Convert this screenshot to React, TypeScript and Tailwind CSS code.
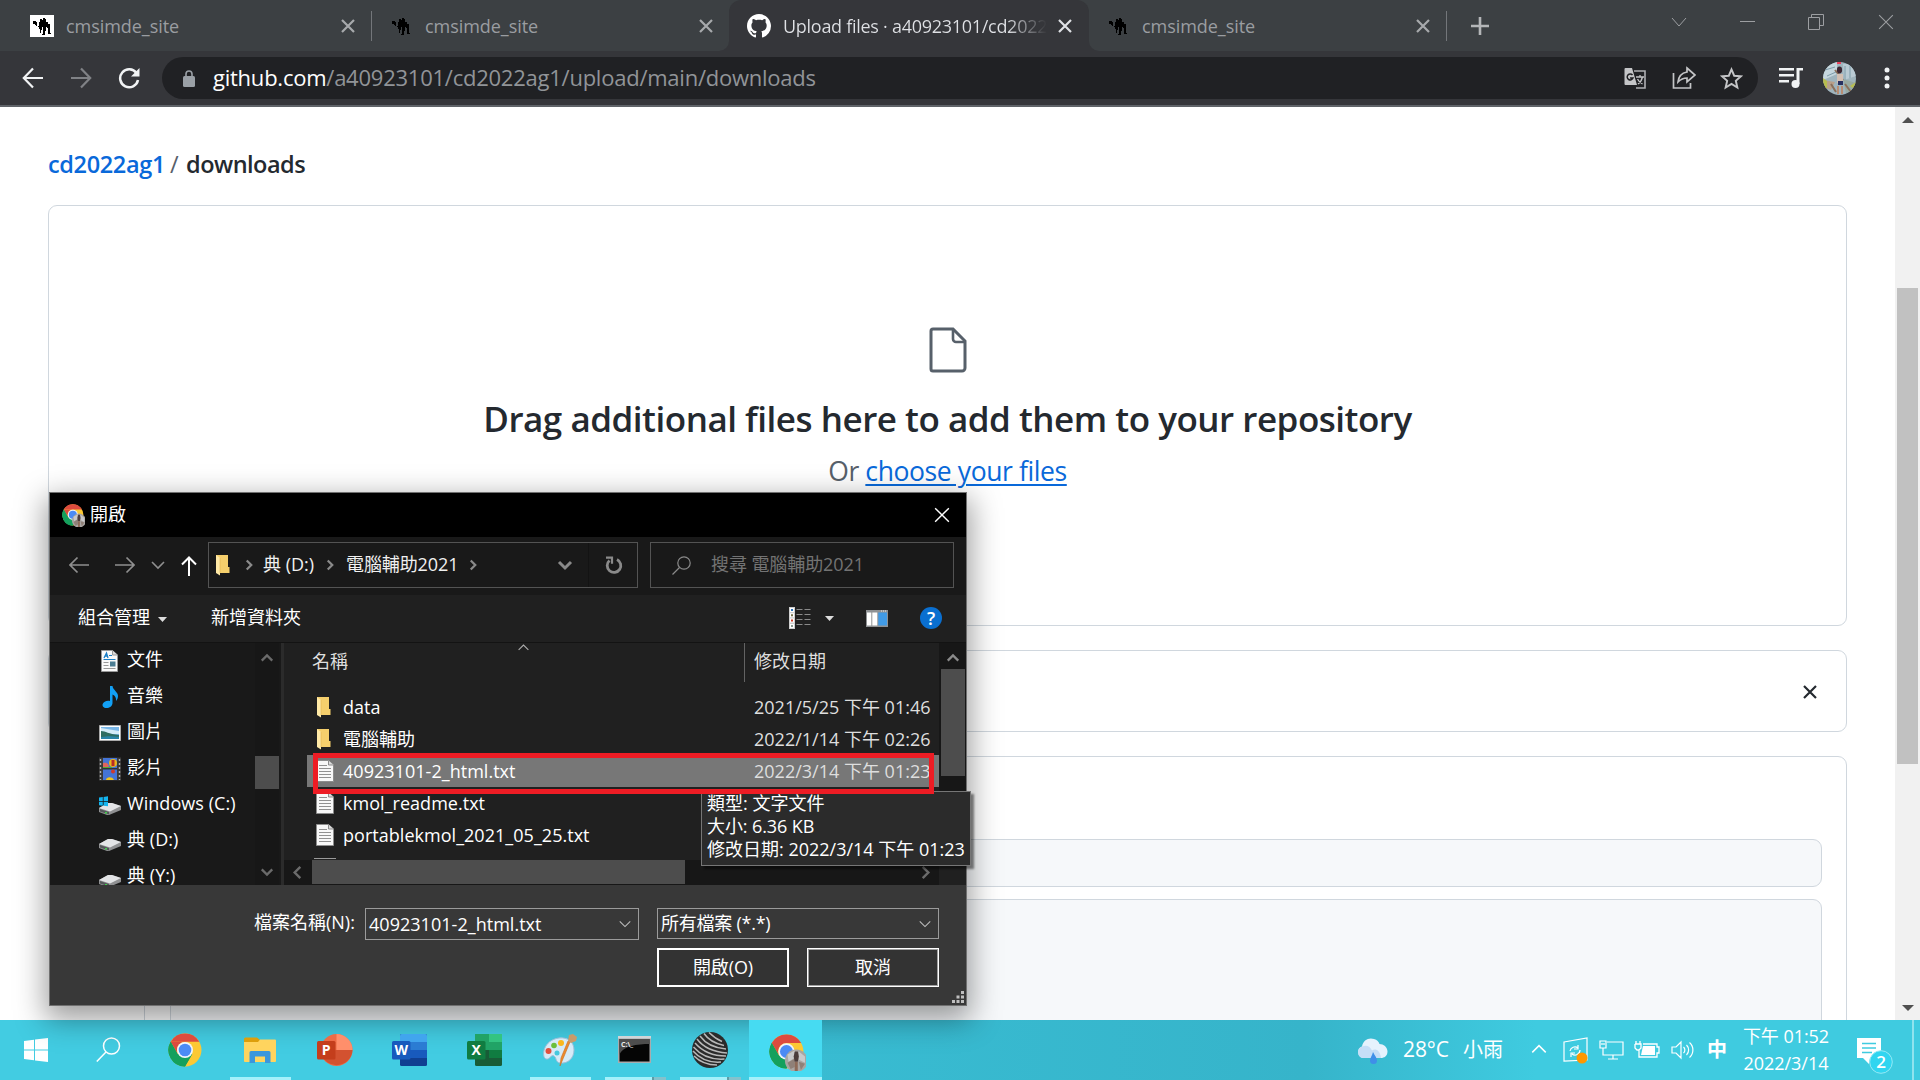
import React from "react";

const FONT = "font-['Open_Sans','Noto_Sans_CJK_TC',sans-serif]";

function Camel({ light }: { light?: boolean }) {
  return (
    <svg className={light ? "h-[22px] w-6 bg-white" : "h-[22px] w-6"} viewBox="0 0 24 22" shapeRendering="crispEdges">
      <path
        fill="#000"
        d="M3 6h3v1h1v4h2V7h1V4h2v1h1V3h2v1h1v3h2v2h2v9h1v1h-3v-6h-1v-1h-1v4h-1v4h-3v-1h1v-7h-1v3h-1v3h-1v-4h-1v-2H8v-1H6v-1H5V9H3z"
      />
    </svg>
  );
}

function Cross({ className, size = 14, w = 2.2 }: { className: string; size?: number; w?: number }) {
  return (
    <svg className={className} width={size} height={size} viewBox="0 0 14 14" fill="none" stroke="currentColor" strokeWidth={w}>
      <path d="M1 1l12 12M13 1L1 13" />
    </svg>
  );
}

function Chevron({ className, d = "M2 5l6 6 6-6", w = 1.6, size = 16 }: { className?: string; d?: string; w?: number; size?: number }) {
  return (
    <svg className={className} width={size} height={size} viewBox="0 0 16 16" fill="none" stroke="currentColor" strokeWidth={w}>
      <path d={d} />
    </svg>
  );
}

const UP = "M2 11l6-6 6 6";
const RIGHT = "M5 2l6 6-6 6";
const LEFT = "M11 2l-6 6 6 6";

function GitHubMark() {
  return (
    <svg className="h-6 w-6" viewBox="0 0 16 16" fill="#fff">
      <path d="M8 0C3.58 0 0 3.58 0 8c0 3.54 2.29 6.53 5.47 7.59.4.07.55-.17.55-.38 0-.19-.01-.82-.01-1.49-2.01.37-2.53-.49-2.69-.94-.09-.23-.48-.94-.82-1.13-.28-.15-.68-.52-.01-.53.63-.01 1.08.58 1.23.82.72 1.21 1.87.87 2.33.66.07-.52.28-.87.51-1.07-1.78-.2-3.64-.89-3.64-3.95 0-.87.31-1.59.82-2.15-.08-.2-.36-1.02.08-2.12 0 0 .67-.21 2.2.82.64-.18 1.32-.27 2-.27s1.36.09 2 .27c1.53-1.04 2.2-.82 2.2-.82.44 1.1.16 1.92.08 2.12.51.56.82 1.27.82 2.15 0 3.07-1.87 3.75-3.65 3.95.29.25.54.73.54 1.48 0 1.07-.01 1.93-.01 2.2 0 .21.15.46.55.38A8.01 8.01 0 0 0 16 8c0-4.42-3.58-8-8-8z" />
    </svg>
  );
}

function ChromeLogo({ className, badge }: { className: string; badge?: boolean }) {
  return (
    <svg className={className} viewBox="0 0 36 36">
      <circle cx="17" cy="17" r="16.5" fill="#fcc934" />
      <path d="M2.7 8.75A16.5 16.5 0 0 1 31.3 8.75H17z" fill="#dd4b3e" />
      <path d="M2.7 8.75A16.5 16.5 0 0 0 17 33.5l7.2-12.4-7.2-3.9-7.4 4z" fill="#14a05d" />
      <path d="M2.7 8.75L10 21.2A8.3 8.3 0 0 1 17 8.75z" fill="#dd4b3e" />
      <path d="M2.7 8.75a16.5 16.5 0 0 0 0 16.5A16.5 16.5 0 0 0 17 33.5l7.2-12.3a8.3 8.3 0 0 1-14.4 0z" fill="#14a05d" />
      <circle cx="17" cy="17" r="8" fill="#f1f5fb" />
      <circle cx="17" cy="17" r="6.3" fill="#4b8bf5" />
      {badge && (
        <g>
          <circle cx="26.5" cy="26" r="11" fill="#a9a5a2" />
          <path d="M18 20l7-4 2 6-8 5zM29 17l6 5v6l-6-3z" fill="#c8c9cb" />
          <path d="M18 28l7-4v8l-4 2zM29 27l6 2-4 6z" fill="#8f8078" />
          <path d="M25 17h3l1 5-1 5h-3l-1-5z" fill="#4a3c3c" />
          <path d="M25 27h3v9h-3z" fill="#8d6a58" />
        </g>
      )}
    </svg>
  );
}

function Avatar() {
  return (
    <svg className="h-[33px] w-[33px] rounded-full" viewBox="0 0 33 33">
      <rect width="33" height="33" fill="#9fb4bd" />
      <path d="M0 0h14v12L0 18z" fill="#c5d6dd" />
      <path d="M20 2h13v12l-12 4z" fill="#b9cad3" />
      <path d="M2 8l10-3M4 14l9-4M22 4v14M27 4v12" stroke="#7d9ba8" strokeWidth="1" />
      <path d="M0 18l12 2-4 8-8-3z" fill="#b9a08a" />
      <path d="M20 17l13 4v7l-10 3z" fill="#98a9a2" />
      <path d="M0 16l4 3v7H0zM27 24l6-4v8z" fill="#b7bd4e" />
      <path d="M12 8l8 10M22 22l6 8M8 22l5 8" stroke="#8a705b" strokeWidth="2" />
      <path d="M14 0h4v2h-4z" fill="#ef3c58" />
      <ellipse cx="16.5" cy="8" rx="2.6" ry="3.4" fill="#3c2732" />
      <path d="M14 12h6v9h-6z" fill="#d2bfb2" />
      <path d="M15 19h5v4h-5z" fill="#283060" />
      <path d="M14 24h2v8h-2zM18 24h2v8h-2z" fill="#b98d72" />
    </svg>
  );
}

function Folder() {
  return (
    <svg className="h-[22px] w-[15px] shrink-0" viewBox="0 0 15 22">
      <path d="M1 1h12v12h1.500v6H1z" fill="#f5cf6c" />
      <path d="M1 1l4 3v17.500L1 19z" fill="#ffe9a6" />
      <path d="M5 4v15" stroke="#dfb453" strokeWidth=".6" />
    </svg>
  );
}

function TextFile() {
  return (
    <svg className="h-[22px] w-[18px] shrink-0" viewBox="0 0 18 22">
      <path d="M.5.500h12l5 4.500v16.500H.5z" fill="#f8f8f8" stroke="#8d8d8d" />
      <path d="M12.500.500v4.500h5" fill="#ddd" stroke="#8d8d8d" />
      <path d="M3 5.500h8M3 8.500h12M3 11.500h12M3 14.500h12M3 17.500h12" stroke="#909090" />
    </svg>
  );
}

function Drive({ win }: { win?: boolean }) {
  return (
    <svg className="h-[22px] w-[22px]" viewBox="0 0 22 22">
      <path d="M0 14l9-5h4l9 3v4l-12 5H8l-8-3z" fill="#8f9092" />
      <path d="M0 14l9-5h4l9 3-11 5.500z" fill="#e3e4e6" />
      <path d="M1 15l9 3v2.500l-9-3z" fill="#55585a" />
      <path d="M6 18h2v1.500H6z" fill="#3fd04a" />
      {win && <path d="M0 3.500l3.800-.5v4H0zM4.600 2.900L9 2.300V7H4.600zM0 7.800h3.800v4L0 11.300zM4.600 7.800H9v4.400l-4.400-.5z" fill="#13b5f0" />}
    </svg>
  );
}

function DocIcon() {
  return (
    <svg className="h-[22px] w-[22px]" viewBox="0 0 22 22">
      <path d="M2.500.500h11l5 4.500v16.500h-16z" fill="#fafafa" stroke="#999" />
      <path d="M13.500.500v4.500h5" fill="#ddd" stroke="#999" />
      <path d="M5 8l2.500-5L9 8M5.500 6H9" stroke="#1a7fc8" strokeWidth="1.300" fill="none" />
      <path d="M10 5.500h3M4.500 9.500h12" stroke="#1a7fc8" strokeWidth="1.200" />
      <path d="M4.500 12.500h5M4.500 15.500h5M4.500 18.500h12" stroke="#999" />
      <path d="M11 11.500h5.500v5H11z" fill="#4b7d93" />
    </svg>
  );
}

function MusicIcon() {
  return (
    <svg className="h-6 w-[22px]" viewBox="0 0 22 24">
      <path d="M11 1h2.500c.5 4 5.500 6 5.500 10 0 2-1 4-2 5 .3-3-.8-5.500-3.500-6.500V18c0 3-3 5-6 5s-4.500-2-3.800-4c.8-2.400 4.300-4 7.300-3z" fill="#12a0f5" />
    </svg>
  );
}

function PictureIcon() {
  return (
    <svg className="h-4 w-[22px]" viewBox="0 0 22 16">
      <path d="M.5.500h21v15H.5z" fill="#fff" stroke="#aaa" />
      <path d="M2 2h18v12H2z" fill="#79b7e8" />
      <path d="M2 3l18 3v3H2z" fill="#d5ebf8" />
      <path d="M2 6c5 0 7 3 18 4v4H2z" fill="#2f6d62" />
      <path d="M2 12c7-1 12-1 18 0v2H2z" fill="#2a84a8" />
    </svg>
  );
}

function VideoIcon() {
  return (
    <svg className="h-6 w-[22px]" viewBox="0 0 22 24">
      <path d="M0 .500h22v23H0z" fill="#3a3a3a" />
      <path d="M1.500 2v21M20.500 2v21" stroke="#b0b0b0" strokeWidth="1.400" strokeDasharray="2 2" />
      <path d="M4 1h14v22H4z" fill="#4474d6" />
      <path d="M4 11h14v1.500H4z" fill="#333" />
      <circle cx="14" cy="6" r="4" fill="#e9b61c" />
      <path d="M12.500 3h3v6h-3z" fill="#b92c25" />
      <path d="M4 6c3-1 5 0 6 3l-2 2H4z" fill="#e0655c" />
      <circle cx="14" cy="14.500" r="2" fill="#d03a2c" />
      <path d="M7 23c0-3 6-4 8 0z" fill="#efc31d" />
      <path d="M4 10h9v1H4z" fill="#4dab35" />
    </svg>
  );
}

type TabProps = { className: string; title: string; icon: React.ReactNode; sep?: boolean };

function Tab({ className, title, icon, sep }: TabProps) {
  return (
    <div className={`flex h-[51px] shrink-0 items-center text-[18px] tracking-[-0.05px] text-[#9a9da1] ${className}`}>
      {icon}
      <span className="ml-3 flex-1 truncate leading-[26px]">{title}</span>
      <Cross className="text-[#a7a9ac]" />
      {sep && <span className="ml-[16px] mr-[-17px] h-[30px] w-px bg-[#73767a]" />}
    </div>
  );
}

function BrowserChrome() {
  return (
    <header className="shrink-0">
      <div className="flex h-[51px] bg-[#3c4043]">
        <Tab className="w-[373px] pl-[30px] pr-[18px]" title="cmsimde_site" icon={<Camel light />} sep />
        <Tab className="w-[356px] pl-[16px] pr-[16px]" title="cmsimde_site" icon={<Camel />} />
        <div className="relative flex h-[51px] w-[360px] shrink-0 items-center rounded-t-[12px] bg-[#35363a] pl-[18px] pr-[17px] text-[18px] text-[#dfe1e5]">
          <svg className="absolute -left-[10px] bottom-0" width="10" height="10"><path d="M10 0v10H0A10 10 0 0 0 10 0z" fill="#35363a" /></svg>
          <svg className="absolute -right-[10px] bottom-0" width="10" height="10"><path d="M0 0v10h10A10 10 0 0 1 0 0z" fill="#35363a" /></svg>
          <GitHubMark />
          <span className="ml-3 w-[264px] overflow-hidden whitespace-nowrap bg-linear-to-r from-[#dfe1e5] from-85% to-[#35363a] bg-clip-text leading-[26px] tracking-[-0.28px] text-transparent">
            Upload files · a40923101/cd2022
          </span>
          <Cross className="ml-auto text-[#dfe1e5]" />
        </div>
        <Tab className="w-[359px] pl-[17px] pr-[18px]" title="cmsimde_site" icon={<Camel />} sep />
        <div className="flex flex-1 items-center pl-[23px] text-[#9d9fa2]">
          <svg width="18" height="18" viewBox="0 0 18 18" stroke="#b4b6b8" strokeWidth="2.600"><path d="M9 0v18M0 9h18" /></svg>
          <div className="mb-2 ml-auto flex items-center">
            <Chevron d="M1 4l7 8 7-8" w={1} className="mr-[53px]" />
            <span className="mr-[53px] h-px w-[15px] bg-[#9d9fa2]" />
            <svg className="mr-[54px]" width="16" height="16" viewBox="0 0 16 16" fill="none" stroke="currentColor"><path d="M.5 3.500h11v12H.5zM3.500 3.500v-3h12v11h-4" /></svg>
            <Cross size={16} w={0.9} className="mr-[26px]" />
          </div>
        </div>
      </div>
      <div className="flex h-[56px] items-center border-b-2 border-[#5f6368] bg-[#35363a] pl-[22px]">
        <svg width="22" height="22" viewBox="0 0 22 22" fill="none" stroke="#f1f3f4" strokeWidth="2.200"><path d="M21 11H2M11 1.500L1.800 11l9.200 9.500" /></svg>
        <svg className="ml-[26px]" width="22" height="22" viewBox="0 0 22 22" fill="none" stroke="#808286" strokeWidth="2.200"><path d="M1 11h19M11 1.500l9.200 9.500-9.200 9.500" /></svg>
        <svg className="ml-[26px]" width="22" height="22" viewBox="0 0 22 22" fill="none" stroke="#f1f3f4" strokeWidth="2.500"><path d="M18.500 6A9 9 0 1 0 20 13" /><path d="M21.500 1v8.500h-8.500z" fill="#f1f3f4" stroke="none" /></svg>
        <div className="ml-[22px] flex h-[42px] w-[1596px] items-center rounded-full bg-[#202124] pl-[21px] pr-[15px]">
          <svg width="12" height="17" viewBox="0 0 12 17"><rect y="6" width="12" height="11" rx="1.500" fill="#9aa0a6" /><path d="M3 7V4a3 3 0 0 1 6 0v3" fill="none" stroke="#9aa0a6" strokeWidth="1.600" /></svg>
          <span className="-mt-[2px] ml-[18px] flex-1 text-[22px] leading-[30px] tracking-[-0.24px] text-[#919498]">
            <span className="text-white">github.com</span>/a40923101/cd2022ag1/upload/main/downloads
          </span>
          <svg className="mr-[25px]" width="23" height="23" viewBox="0 0 23 23">
            <path d="M10 4h11v17H12" fill="none" stroke="#aeb0b3" strokeWidth="1.600" />
            <path d="M1.500 1H8l5 17H1.500A1 1 0 0 1 .5 17V2a1 1 0 0 1 1-1z" fill="#c4c5c7" />
            <path d="M8.500 8A3 3 0 1 0 9 11H6" fill="none" stroke="#202124" strokeWidth="1.500" />
            <path d="M12 10h8M16 8v2M18.500 10c-1 4-3 6-4.500 7M13.500 12c1 2 3 4 5 5" fill="none" stroke="#c4c5c7" strokeWidth="1.300" />
          </svg>
          <svg className="mr-[24px]" width="24" height="24" viewBox="0 0 24 24" fill="none" stroke="#c4c5c7" strokeWidth="1.700"><path d="M1.500 7v15h17v-5" /><path d="M15 2l8 7-8 7v-4c-4 0-6 1-9 4 .5-5 3.500-9 9-10z" /></svg>
          <svg width="23" height="23" viewBox="0 0 24 24" fill="none" stroke="#c4c5c7" strokeWidth="2"><path d="M12 2.500l2.800 6.600 7 .6-5.300 4.700 1.600 7L12 17.700l-6.100 3.700 1.600-7-5.300-4.700 7-.6z" /></svg>
        </div>
        <svg className="ml-[21px]" width="24" height="22" viewBox="0 0 24 22" fill="#f1f3f4"><path d="M0 1h15v2.400H0zM0 7h15v2.400H0zM0 13h10v2.400H0zM17.500 1H24v2.600h-3.500V17h-3z" /><circle cx="16.500" cy="17" r="4" /></svg>
        <div className="ml-[20px]"><Avatar /></div>
        <svg className="ml-[28px]" width="6" height="22" viewBox="0 0 6 22" fill="#f1f3f4"><circle cx="3" cy="3" r="2.500" /><circle cx="3" cy="11" r="2.500" /><circle cx="3" cy="19" r="2.500" /></svg>
      </div>
    </header>
  );
}

function UploadPage() {
  return (
    <main className="flex h-[913px] shrink-0 overflow-hidden bg-white">
      <div className="w-[1895px] overflow-hidden px-12 pt-[41px]">
        <h2 className="flex text-[23.5px] font-semibold leading-8 tracking-[-0.5px] text-[#24292f]">
          <span className="w-[122px] tracking-[-0.35px] text-[#0969da]">cd2022ag1</span>
          <span className="w-4 font-normal text-[#57606a]">/</span>
          <span>downloads</span>
        </h2>
        <section className="mt-[25px] flex h-[421px] w-[1799px] flex-col items-center rounded-[9px] border border-[#d0d7de] pt-[121px]">
          <svg width="38" height="46" viewBox="0 0 38 46" fill="none" stroke="#57606a" strokeWidth="3"><path d="M4 2h20l12 12v27a3 3 0 0 1-3 3H4a2 2 0 0 1-2-2V4a2 2 0 0 1 2-2z" /><path d="M24 2v10a3 3 0 0 0 3 3h9" strokeWidth="2.600" /></svg>
          <h3 className="mt-[21px] whitespace-nowrap text-[35px] font-semibold leading-[50px] tracking-[-0.48px] text-[#24292f]">
            Drag additional files here to add them to your repository
          </h3>
          <p className="mt-2 whitespace-nowrap text-[26.5px] leading-[38px] tracking-[-0.4px] text-[#57606a]">
            Or <span className="text-[#0969da] underline decoration-2 underline-offset-[3px]">choose your files</span>
          </p>
        </section>
        <section className="mt-6 flex h-[82px] w-[1799px] items-center justify-end rounded-[9px] border border-[#d0d7de] pr-[29px]">
          <Cross className="mt-px text-[#24292f]" />
        </section>
        <section className="ml-24 mt-6 h-[300px] w-[1703px] rounded-[9px] border border-[#d0d7de] px-[24px] pl-[25px] pt-[82px]">
          <div className="h-12 rounded-[9px] border border-[#d0d7de] bg-[#f6f8fa]" />
          <div className="mt-3 h-[190px] rounded-[9px] border border-[#d0d7de] bg-[#f6f8fa]" />
        </section>
      </div>
      <div className="flex w-[25px] flex-col items-center bg-[#f1f1f1]">
        <svg className="mt-[10px]" width="12" height="6"><path d="M6 0l6 6H0z" fill="#505050" /></svg>
        <div className="mt-[165px] h-[476px] w-[21px] bg-[#c1c1c1]" />
        <svg className="mb-[9px] mt-auto" width="12" height="6"><path d="M6 6l6-6H0z" fill="#505050" /></svg>
      </div>
    </main>
  );
}

const places = [
  { name: "文件", icon: <DocIcon /> },
  { name: "音樂", icon: <MusicIcon /> },
  { name: "圖片", icon: <PictureIcon /> },
  { name: "影片", icon: <VideoIcon /> },
  { name: "Windows (C:)", icon: <Drive win /> },
  { name: "典 (D:)", icon: <Drive /> },
  { name: "典 (Y:)", icon: <Drive /> },
];

const files = [
  { name: "data", date: "2021/5/25 下午 01:46", folder: true },
  { name: "電腦輔助", date: "2022/1/14 下午 02:26", folder: true },
  { name: "40923101-2_html.txt", date: "2022/3/14 下午 01:23", selected: true },
  { name: "kmol_readme.txt", date: "" },
  { name: "portablekmol_2021_05_25.txt", date: "" },
];

function OpenDialog() {
  return (
    <div className="absolute left-[49px] top-[492px] h-[514px] w-[918px] border border-[#707070] bg-[#383838] text-[18px] leading-6 text-white shadow-[0_10px_28px_4px_rgba(0,0,0,0.38)]">
      <div className="flex h-11 items-center bg-black pl-3 pr-[16px]">
        <ChromeLogo className="h-[23px] w-[23px]" badge />
        <span className="-mt-[2px] ml-[5px]">開啟</span>
        <Cross size={16} w={1.2} className="ml-auto" />
      </div>
      <div className="flex h-[58px] items-center bg-[#191919] pl-[19px]">
        <svg className="-mt-[2px]" width="20" height="18" viewBox="0 0 20 18" fill="none" stroke="#8f8f8f" strokeWidth="1.700"><path d="M20 9H1.500M8.500 1.500L1 9l7.500 7.500" /></svg>
        <svg className="-mt-[2px] ml-[26px]" width="20" height="18" viewBox="0 0 20 18" fill="none" stroke="#8f8f8f" strokeWidth="1.700"><path d="M0 9h18.500M11.500 1.500L19 9l-7.500 7.500" /></svg>
        <Chevron className="-mt-[2px] ml-[15px] text-[#8f8f8f]" />
        <svg className="ml-[15px]" width="16" height="20" viewBox="0 0 16 20" fill="none" stroke="#fff" strokeWidth="2"><path d="M8 20V1.500M1 8.500l7-7 7 7" /></svg>
        <div className="ml-[11px] mb-[2px] flex h-[46px] w-[430px] shrink-0 items-center border border-[#535353] text-[#f0f0f0]">
          <div className="ml-[6px]"><Folder /></div>
          <Chevron size={12} w={3} d={RIGHT} className="ml-[13px] text-[#8a8a8a]" />
          <span className="-mt-[2px] ml-[8px] w-[61px] whitespace-nowrap">典 (D:)</span>
          <Chevron size={12} w={3} d={RIGHT} className="text-[#8a8a8a]" />
          <span className="-mt-[2px] ml-[10px] w-[121px] whitespace-nowrap tracking-[-0.1px]">電腦輔助2021</span>
          <Chevron size={12} w={3} d={RIGHT} className="text-[#8a8a8a]" />
          <Chevron w={3} className="ml-auto mr-[15px] text-[#8a8a8a]" />
          <div className="flex h-full w-[49px] items-center justify-center border-l border-[#131313]">
            <svg className="ml-[2px]" width="18" height="19" viewBox="0 0 18 19" fill="none" stroke="#8a8a8a" strokeWidth="2.800"><path d="M12 3.500A6.800 6.800 0 1 1 4.500 4.500" /><path d="M1 1.700h6v6" strokeWidth="2.200" /></svg>
          </div>
        </div>
        <div className="mb-[2px] ml-3 flex h-[46px] w-[304px] items-center border border-[#535353] pl-[21px] text-[#737373]">
          <svg width="19" height="19" viewBox="0 0 19 19" fill="none" stroke="#8a8a8a" strokeWidth="1.200"><circle cx="12" cy="7" r="6.200" /><path d="M7.500 11.500L.5 18.500" /></svg>
          <span className="-mt-[2px] ml-[20px] tracking-[-0.08px]">搜尋 電腦輔助2021</span>
        </div>
      </div>
      <div className="flex h-[48px] items-center border-b border-[#131313] bg-[#202020] pl-[28px] pr-[24px]">
        <span className="-mt-[4px]">組合管理</span>
        <svg className="ml-[8px] mt-[2px]" width="9" height="5"><path d="M0 0h9L4.500 5z" fill="#ddd" /></svg>
        <span className="-mt-[4px] ml-[44px]">新增資料夾</span>
        <svg className="-mt-px ml-auto" width="22" height="22" viewBox="0 0 22 22">
          <path d="M0 0h6v22H0z" fill="#cfcfcf" />
          <path d="M1 1h4v4H1zM1 6.300h4v4H1zM1 11.600h4v4H1zM1 17h4v4H1z" fill="#fff" />
          <path d="M2 2h2v2H2z" fill="#2c75bd" /><path d="M2 7.300h2v2H2z" fill="#75704a" /><path d="M2 12.600h2v2H2z" fill="#d0402a" /><path d="M2 18h2v2H2z" fill="#8d9b92" />
          <path d="M7.500 2.500h6M15.500 2.500h6M7.500 7.500h6M15.500 7.500h6M7.500 12.500h6M15.500 12.500h6M7.500 17.500h6M15.500 17.500h6" stroke="#8a8a8a" />
        </svg>
        <svg className="ml-[14px]" width="9" height="5"><path d="M0 0h9L4.500 5z" fill="#ddd" /></svg>
        <svg className="ml-[32px]" width="22" height="17" viewBox="0 0 22 17"><path d="M0 0h22v17H0z" fill="#8f9294" /><path d="M1 2.500h4.300v13H1zM6.300 2.500h5v13h-5z" fill="#fff" /><path d="M12.300 2.500H21v13h-8.700z" fill="#419be6" /><path d="M15 1h5" stroke="#eee" strokeDasharray="1 1" /></svg>
        <span className="-mt-px ml-[32px] flex h-[22px] w-[22px] items-center justify-center rounded-full bg-[#0a6fd0] text-[18px] font-semibold">?</span>
      </div>
      <div className="flex h-[242px] overflow-hidden">
        <div className="flex w-[231px] bg-[#191919]">
          <div className="w-[205px] overflow-hidden pl-[49px]">
            {places.map((p) => (
              <div key={p.name} className="flex h-9 items-center whitespace-nowrap">
                {p.icon}
                <span className="-mt-[4px] ml-[6px] tracking-[0.05px]">{p.name}</span>
              </div>
            ))}
          </div>
          <div className="flex w-6 flex-col items-center bg-[#171717] text-[#6b6b6b]">
            <Chevron size={14} w={2.6} d={UP} className="mt-2" />
            <div className="mt-[91px] h-[33px] w-6 bg-[#4d4d4d]" />
            <Chevron size={14} w={2.6} className="mb-[6px] mt-auto" />
          </div>
        </div>
        <div className="w-[3px] bg-[#2b2b2b]" />
        <div className="flex w-[655px] flex-col bg-[#202020]">
          <div className="relative flex h-[48px] shrink-0 text-[#dedede]">
            <span className="ml-[28px] mt-[6px] w-[432px]">名稱</span>
            <Chevron size={13} w={1.3} d={UP} className="absolute left-[233px] top-[-2px] text-[#b0b0b0]" />
            <span className="mr-[9px] h-[39px] w-px bg-[#636363]" />
            <span className="mt-[6px]">修改日期</span>
          </div>
          {files.map((f) => (
            <div
              key={f.name}
              className={
                f.selected
                  ? "ml-[23px] flex h-8 shrink-0 items-center whitespace-nowrap bg-[#777777] pl-[9px] text-white"
                  : "ml-[23px] flex h-8 shrink-0 items-center whitespace-nowrap pl-[9px]"
              }
            >
              <span className="w-[27px]">{f.folder ? <Folder /> : <TextFile />}</span>
              <span className="w-[411px] tracking-[0.03px]">{f.name}</span>
              <span className="text-[#dedede]">{f.date}</span>
            </div>
          ))}
          <div className="ml-[30px] mt-[7px] h-px w-[22px] shrink-0 bg-[#9a9a9a]" />
          <div className="mt-px flex h-[26px] shrink-0 items-start bg-[#171717] pl-[6px] text-[#6b6b6b]">
            <Chevron size={15} w={2.6} d={LEFT} className="mt-[5px]" />
            <div className="ml-[7px] h-6 w-[373px] bg-[#4d4d4d]" />
            <Chevron size={15} w={2.6} d={RIGHT} className="ml-auto mr-[6px] mt-[5px]" />
          </div>
        </div>
        <div className="flex flex-1 flex-col items-center bg-[#202020]">
          <div className="flex h-[216px] w-full flex-col items-center bg-[#171717] text-[#8a8a8a]">
            <Chevron size={14} w={2.6} d={UP} className="mt-2" />
            <div className="mt-[4px] h-[107px] w-6 bg-[#4d4d4d]" />
          </div>
        </div>
      </div>
      <div className="flex h-[120px] flex-col">
        <div className="mt-[23px] flex items-start">
          <span className="ml-[204px] mt-[2px] w-[111px] whitespace-nowrap">檔案名稱(N):</span>
          <div className="flex h-8 w-[274px] items-center border border-[#9b9b9b] pl-[3px] pr-[6px]">
            <span className="flex-1 tracking-[0.03px]">40923101-2_html.txt</span>
            <Chevron size={14} w={1.2} className="text-[#c0c0c0]" />
          </div>
          <div className="ml-[18px] flex h-[31px] w-[282px] items-center border border-[#9b9b9b] pl-[3px] pr-[6px]">
            <span className="-mt-px flex-1 tracking-[-0.25px]">所有檔案 (*.*)</span>
            <Chevron size={14} w={1.2} className="text-[#c0c0c0]" />
          </div>
        </div>
        <div className="ml-[607px] mt-2 flex gap-[18px]">
          <span className="flex h-[39px] w-[132px] items-center justify-center border-2 border-white bg-[#333] pb-[2px] tracking-[-0.1px]">開啟(O)</span>
          <span className="flex h-[39px] w-[132px] items-center justify-center border border-white bg-[#333] pb-[2px] outline-1 -outline-offset-2 outline-[#a0a0a0]">取消</span>
        </div>
        <svg className="ml-auto mr-[2px] mt-[4px] shrink-0" width="12" height="12" fill="#bfbfbf"><path d="M9 0h3v3H9zM9 4.500h3v3H9zM4.500 4.500h3v3h-3zM0 9h3v3H0zM4.500 9h3v3h-3zM9 9h3v3H9z" /></svg>
      </div>
      <div className="absolute left-[651px] top-[298px] h-[75px] w-[270px] whitespace-nowrap border border-[#767676] bg-[#2b2b2b] pl-[5px] leading-[23px] shadow-[3px_3px_2px_rgba(0,0,0,0.45)]">
        <p>類型: 文字文件</p>
        <p className="tracking-[-0.1px]">大小: 6.36 KB</p>
        <p>修改日期: 2022/3/14 下午 01:23</p>
      </div>
      <div className="absolute left-[263px] top-[260px] h-[41px] w-[621px] border-[5px] border-[#ed1c24]" />
    </div>
  );
}

function Office({ letter, kind }: { letter: string; kind: "p" | "w" | "x" }) {
  const box = { p: "#c43e1c", w: "#185abd", x: "#107c41" }[kind];
  return (
    <svg width="36" height="34" viewBox="0 0 36 34">
      {kind === "p" && (
        <g>
          <circle cx="19.500" cy="17" r="16" fill="#ed6c47" />
          <path d="M19.500 1a16 16 0 0 1 16 16h-16z" fill="#ff8f6b" />
          <path d="M35.500 17a16 16 0 0 1-31.500 3l15.500-3z" fill="#d35230" />
        </g>
      )}
      {kind === "w" && (
        <g>
          <rect x="8" y="1" width="27" height="32" rx="1.500" fill="#103f91" />
          <path d="M8 17h27v8H8z" fill="#185abd" />
          <path d="M8 9h27v8H8z" fill="#2b7cd3" />
          <path d="M9.500 1h24A1.500 1.500 0 0 1 35 2.500V9H8V2.500A1.500 1.500 0 0 1 9.500 1z" fill="#41a5ee" />
        </g>
      )}
      {kind === "x" && (
        <g>
          <rect x="8" y="1" width="27" height="32" rx="1.500" fill="#185c37" />
          <path d="M8 1h14v16H8z" fill="#21a366" />
          <path d="M22 1h13v8H22z" fill="#33c481" />
          <path d="M22 9h13v8H22z" fill="#21a366" />
          <path d="M22 17h13v8H22z" fill="#107c41" />
        </g>
      )}
      <rect x="0" y="8" width="18.500" height="18.500" rx="1.500" fill={box} />
      <text x="9.200" y="22" textAnchor="middle" fontSize="14" fontWeight="700" fill="#fff">{letter}</text>
    </svg>
  );
}

function Taskbar() {
  const cell = "relative flex h-[60px] w-[75px] shrink-0 items-center justify-center pr-[2px]";
  const line = "absolute bottom-0 left-[7px] h-[3px] w-[61px] bg-[#a4f1fb]";
  return (
    <footer className="flex h-[60px] shrink-0 items-center bg-linear-to-r from-[#3cc8df] via-[#36b4ca] via-68% to-[#3fcbe0] to-80% text-white">
      <div className="flex h-full w-[822px] bg-[#42cce2]">
        <div className="flex w-[72px] items-center justify-center"><svg width="24" height="24" viewBox="0 0 24 24" fill="#fff"><path d="M0 3l10-1.300v9.700H0zM11 1.500L24 0v11.400H11zM0 12.500h10v9.800L0 21zM11 12.500h13V24l-13-1.600z" /></svg></div>
        <div className="flex w-[72px] items-center justify-center"><svg className="-mt-px" width="25" height="25" viewBox="0 0 25 25" fill="none" stroke="#fff" strokeWidth="1.500"><circle cx="15.500" cy="9" r="8" /><path d="M10 15L.8 24.500" /></svg></div>
        <div className="w-[4px]" />
        <div className={cell}><ChromeLogo className="ml-[2px] mt-[2px] h-9 w-9" /></div>
        <div className={cell}>
          <svg width="32" height="28" viewBox="0 0 32 28"><path d="M0 3a1.500 1.500 0 0 1 1.500-1.500H13L16 4v3H0z" fill="#dd9f0b" /><path d="M0 6h14l2-2.500h15a1 1 0 0 1 1 1V25a1 1 0 0 1-1 1H1a1 1 0 0 1-1-1z" fill="#ffd45e" /><path d="M5.500 27V16.500a1.500 1.500 0 0 1 1.500-1.500h18a1.500 1.500 0 0 1 1.500 1.500V27H21v-6.500H11V27z" fill="#3b97dc" /></svg>
          <span className={line} />
        </div>
        <div className={cell}><Office letter="P" kind="p" /></div>
        <div className={cell}><Office letter="W" kind="w" /></div>
        <div className={cell}><Office letter="X" kind="x" /></div>
        <div className={cell}>
          <svg width="36" height="36" viewBox="0 0 36 36">
            <path d="M17 6c9-1 15 4 15 12s-6 14-14 13c-5-1-3-5-6-7s-4 4-8 3c-5-2-3-19 13-21z" fill="#d6eaf7" stroke="#9dbfd8" />
            <circle cx="6.500" cy="19" r="3" fill="#e2503e" /><circle cx="12" cy="13.500" r="2.800" fill="#6bbf3a" /><circle cx="19" cy="11" r="3" fill="#fbb81c" /><circle cx="15" cy="21" r="2.500" fill="#46c8de" />
            <path d="M28 10L18 34l1-8 7-17z" fill="#ee8a2c" stroke="#c96c1f" strokeWidth=".6" /><path d="M26 9l1-6 4-1 4 3-1 4-5 2z" fill="#c79b6b" />
          </svg>
          <span className={line} />
        </div>
        <div className={cell}>
          <svg className="-mt-[2px]" width="33" height="27" viewBox="0 0 33 27"><path d="M0 0h33v27H0z" fill="#a9acae" /><path d="M0 0h33v2.500H0z" fill="#d0d5d8" /><path d="M1.500 3h30v22.500h-30z" fill="#050505" /><path d="M1.500 3h30v5C20 8 4 10 1.500 19z" fill="#4d4d4d" /><text x="3" y="11" fontSize="7" fontWeight="700" fill="#eee">C:\_</text></svg>
          <span className={line} /><span className="absolute bottom-0 left-[54px] h-[3px] w-[14px] border-l-2 border-[#5f9ba5] bg-[#83c2cd]" />
        </div>
        <div className={cell}>
          <svg width="36" height="36" viewBox="0 0 36 36">
            <circle cx="18" cy="18" r="18" fill="#2b2b2b" />
            <g fill="none" stroke="#b8b8b8" strokeWidth="1.500"><path d="M12 1.500c4 6 11 10 20 12M8 4c5 7 14 12 26 13M5 7c6 8 16 13 30 14M3 11c7 8 17 13 31 13M1.500 15c7 8 17 13 31 12M1 19c7 8 16 12 28 11M2 24c6 6 13 9 23 9M17 .500c4 4 8 7 13 9" /></g>
          </svg>
          <span className={line} /><span className="absolute bottom-0 left-[54px] h-[3px] w-[14px] border-l-2 border-[#5f9ba5] bg-[#83c2cd]" />
        </div>
        <div className="relative ml-px flex w-[73px] items-center justify-center bg-[#46dbf2]">
          <ChromeLogo className="ml-1 mt-1 h-[37px] w-[37px]" badge />
          <span className="absolute bottom-0 left-0 h-[3px] w-full bg-[#a4f1fb]" />
        </div>
      </div>
      <svg className="ml-[535px]" width="31" height="27" viewBox="0 0 31 27"><path d="M6 21a6 6 0 0 1-1-11.500C6 3 12 0 17 2c3 .5 5 3 5.500 5 4 0 8 3 8 7.500S27 21 24 21z" fill="#e6f2fd" /><path d="M6 21a6 6 0 0 1-1-11.500c5-2 8 0 10 4 3-2 8-1 9 7.500z" fill="#c6def7" /><path d="M16 15c2 4 4 6 4 8.500a3.500 3.500 0 0 1-7 0C13 21 15 19 16 15z" fill="#3f8fe8" /></svg>
      <span className="ml-[15px] w-[60px] text-[21px] tracking-[-0.1px]">28°C</span>
      <span className="w-[69px] text-[20px]">小雨</span>
      <Chevron size={18} w={1.3} d={UP} className="-ml-[2px] mt-[-2px]" />
      <svg className="ml-[15px]" width="25" height="27" viewBox="0 0 25 27" fill="none" stroke="#fff" strokeWidth="1.200"><path d="M1 5l23-4v22L1 24z" /><path d="M7 14a5 5 0 0 1 8-3M15 8v4h-4M17 13a5 5 0 0 1-8 4M8 20v-4h4" /><circle cx="19" cy="21" r="5.500" fill="#ff9800" stroke="none" /></svg>
      <svg className="ml-[11px]" width="25" height="20" viewBox="0 0 25 20" fill="none" stroke="#fff" strokeWidth="1.200"><path d="M8 2h16v13H4V9M1 1h6v7H1zM4 8v3M9 19h10M14 15v4M3 3v2M5 3v2" /></svg>
      <svg className="ml-[10px]" width="26" height="20" viewBox="0 0 26 20"><path d="M9 4h14v3h2v6h-2v4H5v-4" fill="none" stroke="#fff" strokeWidth="1.300" /><path d="M9 6h12v9H7z" fill="#fff" /><path d="M2 1v3M6 1v3M1 4h6v4l-2 2v3M1 4v4l2 2h2" fill="none" stroke="#fff" strokeWidth="1.300" /></svg>
      <svg className="ml-[11px]" width="23" height="20" viewBox="0 0 23 20" fill="none" stroke="#fff" strokeWidth="1.200"><path d="M1 7h4l5-5v16l-5-5H1zM12.500 7a4 4 0 0 1 0 6M15.500 5a7 7 0 0 1 0 10M18.500 2.500a10 10 0 0 1 0 15" /></svg>
      <span className="ml-[13px] w-[33px] text-[20px] font-semibold">中</span>
      <div className="mb-px w-[92px] whitespace-nowrap text-center text-[18px] leading-[27px] tracking-[-0.05px]">
        <p>下午 01:52</p>
        <p>2022/3/14</p>
      </div>
      <svg className="ml-[25px] shrink-0" width="38" height="48" viewBox="0 0 38 48">
        <path d="M0 12h24v20H13l-1 6-6-6H0z" fill="#fff" /><path d="M5 17.500h14M5 22h14M5 26.500h10" stroke="#3fcbe0" strokeWidth="1.300" />
        <circle cx="24" cy="36" r="11.300" fill="#30d5f0" stroke="#96e9f5" />
        <text x="24" y="42" textAnchor="middle" fontSize="17" fontWeight="600" fill="#fff">2</text>
      </svg>
      <span className="ml-auto mr-[6px] h-full w-[2px] shrink-0 bg-[#8fe3ee]" />
    </footer>
  );
}

export default function App() {
  return (
    <div className={`relative flex h-[1080px] w-[1920px] flex-col overflow-hidden bg-white ${FONT}`}>
      <BrowserChrome />
      <UploadPage />
      <OpenDialog />
      <Taskbar />
    </div>
  );
}
